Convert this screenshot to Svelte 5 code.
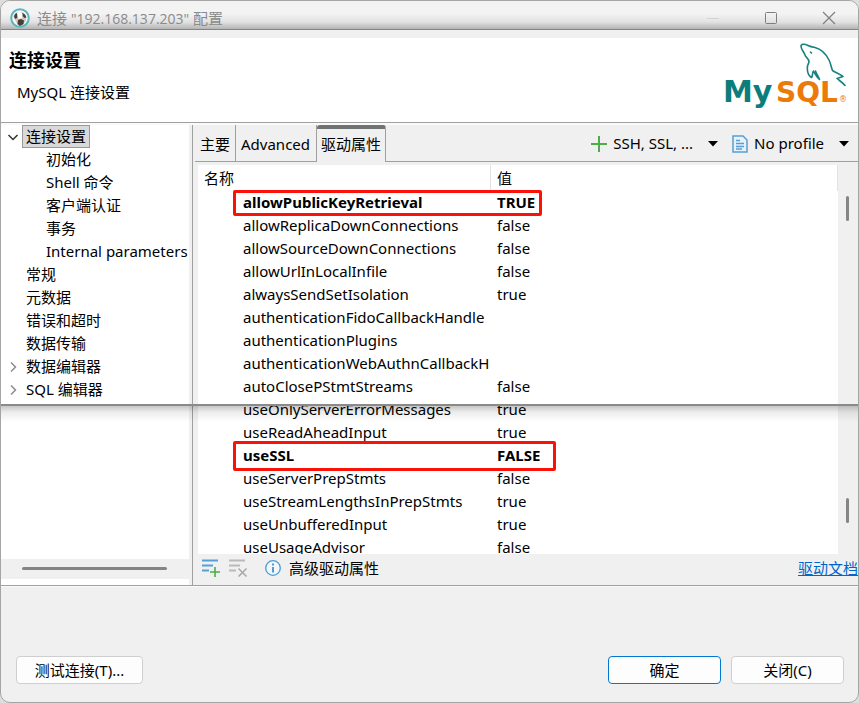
<script>
  const tree = [
    { text: '连接设置', level: 0, arrow: 'open', selected: true },
    { text: '初始化', level: 1 },
    { text: 'Shell 命令', level: 1 },
    { text: '客户端认证', level: 1 },
    { text: '事务', level: 1 },
    { text: 'Internal parameters', level: 1 },
    { text: '常规', level: 0 },
    { text: '元数据', level: 0 },
    { text: '错误和超时', level: 0 },
    { text: '数据传输', level: 0 },
    { text: '数据编辑器', level: 0, arrow: 'closed' },
    { text: 'SQL 编辑器', level: 0, arrow: 'closed' }
  ];
  const tabs = ['主要', 'Advanced', '驱动属性'];
  let active = $state(2);
  const props = [
    ['allowPublicKeyRetrieval', 'TRUE', true],
    ['allowReplicaDownConnections', 'false'],
    ['allowSourceDownConnections', 'false'],
    ['allowUrlInLocalInfile', 'false'],
    ['alwaysSendSetIsolation', 'true'],
    ['authenticationFidoCallbackHandle', ''],
    ['authenticationPlugins', ''],
    ['authenticationWebAuthnCallbackH', ''],
    ['autoClosePStmtStreams', 'false'],
    ['useOnlyServerErrorMessages', 'true'],
    ['useReadAheadInput', 'true'],
    ['useSSL', 'FALSE', true],
    ['useServerPrepStmts', 'false'],
    ['useStreamLengthsInPrepStmts', 'true'],
    ['useUnbufferedInput', 'true'],
    ['useUsageAdvisor', 'false']
  ];
</script>

<div class="dialog">
  <header class="titlebar">
    <svg class="app-icon" width="20" height="20" viewBox="0 0 20 20" aria-hidden="true">
      <circle cx="10" cy="10" r="8.800" fill="#f5f5f3" stroke="#58b6bf" stroke-width="2" />
      <path d="M3.500 9C4 5 8 3 12 4.500l4 3v5l-3 4.500-5 .5-2-4z" fill="#cfc8c1" />
      <path d="M4 8l2-3 2 1-1 4-2 1zM12 4.500l3 2 1.500 3-2 .5-2-2zM8 12l3-1 3 1.500-.5 3.500-3.500 2-2.500-2z" fill="#4a3d36" />
      <path d="M7 5l3-1.500L12.500 6 12 10 9 11 7.500 8z" fill="#fff" />
    </svg>
    <span class="title">连接 <span class="host">"192.168.137.203"</span> 配置</span>
    <button class="win" aria-label="最小化"><svg width="14" height="14"><path d="M1 7.5h12" stroke="#d3d3d3" /></svg></button>
    <button class="win" aria-label="最大化"><svg width="14" height="14"><rect x="1.5" y="1.5" width="11" height="11" rx="1" fill="none" stroke="#7e7e7e" /></svg></button>
    <button class="win" aria-label="关闭"><svg width="14" height="14"><path d="M1 1l12 12M13 1L1 13" stroke="#7e7e7e" stroke-width="1.2" /></svg></button>
  </header>

  <section class="banner">
    <div>
      <h1>连接设置</h1>
      <p>MySQL 连接设置</p>
    </div>
    <svg class="logo" width="124" height="76" viewBox="0 0 124 76" role="img" aria-label="MySQL">
      <g fill="none" stroke="#16827f" stroke-width="1.600" stroke-linejoin="round" stroke-linecap="round">
        <path d="M121 47.500C119 45 116 43 113 40.500L119 38.500C117 36 112 35 108.500 32.500C107 29 107 26 105 22C102 16 97 11 91 9.500C88 9 86 8.500 84 7.500C80 5.500 77 6 77 8.500C77.500 12 79.500 13 81 17C82 20 85 20.500 85 24C84.500 26 83 27 83.300 31C83.500 35 85 38 87.500 39.500C89 38 88 35 89.500 33C91 36 93 39.500 95.500 41.500C94.500 38.500 92.500 36.500 91.500 33" />
        <path d="M86.500 14l1 1" />
      </g>
      <text class="word my" x="-1" y="64" fill="#0b7d7b">My</text>
      <text class="word" x="52" y="64" fill="#ec7a08">SQL</text>
      <text class="reg" x="115" y="64" fill="#ec7a08">®</text>
    </svg>
  </section>

  <main>
    <nav class="side" aria-label="设置">
      <ul>
        {#each tree as item}
          <li class:child={item.level === 1}>
            <span class="twist">
              {#if item.arrow === 'open'}
                <svg width="12" height="12" viewBox="0 0 12 12"><path d="M1.500 4L6 8.500 10.500 4" fill="none" stroke="#333" stroke-width="1.500" /></svg>
              {:else if item.arrow === 'closed'}
                <svg width="12" height="12" viewBox="0 0 12 12"><path d="M4 1.500L8.500 6 4 10.500" fill="none" stroke="#8c8c8c" stroke-width="1.500" /></svg>
              {/if}
            </span>
            <button class:selected={item.selected}>{item.text}</button>
          </li>
        {/each}
      </ul>
      <div class="hscroll"><span></span></div>
    </nav>

    <section class="panel">
      <div class="tabbar">
        <div class="tabs" role="tablist">
          {#each tabs as tab, i}
            <button role="tab" aria-selected={active === i} class:active={active === i} onclick={() => (active = i)}>{tab}</button>
          {/each}
        </div>
        <div class="tools">
          <button class="drop">
            <svg width="16" height="16"><path d="M8 0v16M0 8h16" stroke="#4fab4b" stroke-width="2" /></svg>
            <span>SSH, SSL, ...</span>
            <svg class="caret" width="10" height="6"><path d="M0 0h10L5 5.500z" /></svg>
          </button>
          <button class="drop">
            <svg width="16" height="18" viewBox="0 0 16 18"><path d="M1 1h10l4 4v12H1z" fill="#e8f2fa" stroke="#559fd3" stroke-width="1.500" /><path d="M4 5.500h4M4 8.500h8M4 11.500h8M4 14h6" stroke="#559fd3" stroke-width="1.300" /></svg>
            <span>No profile</span>
            <svg class="caret" width="10" height="6"><path d="M0 0h10L5 5.500z" /></svg>
          </button>
        </div>
      </div>

      <div class="grid">
        <div class="view">
          <table>
            <thead>
              <tr><th class="name">名称</th><th>值</th></tr>
            </thead>
            <tbody>
              {#each props as [name, value, changed]}
                <tr class:changed><td>{name}</td><td>{value}</td></tr>
              {/each}
            </tbody>
          </table>
          <div class="mark first"></div>
          <div class="mark second"></div>
        </div>
        <div class="vscroll"><span></span><span></span></div>
      </div>

      <div class="actions">
        <button aria-label="添加属性"><svg width="19" height="18"><path d="M0 1.500h16M0 6.500h11M0 11.500h7" stroke="#559fd3" stroke-width="1.800" /><path d="M13 8v10M8 13h10" stroke="#4fab4b" stroke-width="1.600" /></svg></button>
        <button aria-label="删除属性" disabled><svg width="19" height="18"><path d="M0 1.500h16M0 6.500h11M0 11.500h7" stroke="#b9b9b9" stroke-width="1.800" /><path d="M9.500 9.500l8 8M17.500 9.500l-8 8" stroke="#a8a8a8" stroke-width="1.500" /></svg></button>
        <svg class="info" width="16" height="16"><circle cx="8" cy="8" r="7.300" fill="#f1f7fb" stroke="#4b9ad2" stroke-width="1.300" /><path d="M8 3.500v2M8 7v5.500" stroke="#3f92ce" stroke-width="1.800" /></svg>
        <span>高级驱动属性</span>
        <a href="#docs">驱动文档</a>
      </div>
    </section>
    <div class="seam"></div>
  </main>

  <footer>
    <button class="test">测试连接(T)...</button>
    <button class="ok">确定</button>
    <button>关闭(C)</button>
  </footer>
</div>

<style>
  :global(body) {
    background: #dedede;
  }
  .dialog {
    box-sizing: border-box;
    min-height: 100vh;
    display: flex;
    flex-direction: column;
    border: 1px solid #a5a5a5;
    border-radius: 10px;
    background: #f0f0f0;
    overflow: hidden;
    color: #000;
    font: 15px/23px "Noto Sans", "Noto Sans CJK SC", sans-serif;
  }
  button {
    font: inherit;
    color: inherit;
    border: 0;
    padding: 0;
    background: none;
    white-space: nowrap;
  }
  svg {
    display: block;
    flex: none;
  }
  .titlebar {
    display: flex;
    align-items: center;
    box-sizing: border-box;
    height: 29px;
    padding: 6px 0 0 9px;
    border-bottom: 1px solid #858585;
    background: linear-gradient(#f3f3f3 0 45%, #e2e2e2 75%, #b4b4b4);
  }
  .title {
    flex: 1;
    padding-left: 7px;
    color: #8a8a8a;
    font-family: "Open Sans", "Noto Sans CJK SC", sans-serif;
  }
  .host {
    font-size: 14px;
  }
  .win {
    width: 58px;
    display: flex;
    justify-content: center;
  }
  .banner {
    display: flex;
    justify-content: space-between;
    margin-top: 8px;
    padding: 0 10px 0 8px;
    height: 84px;
    background: #fff;
    border-bottom: 1px solid #a0a0a0;
  }
  h1 {
    margin: 10px 0 0;
    font-size: 18px;
    line-height: 24px;
    font-weight: 700;
  }
  p {
    margin: 9px 0 0 8px;
  }
  .word {
    font: bold 28px "DejaVu Sans", sans-serif;
  }
  .my {
    font-size: 30px;
  }
  .reg {
    font: 8px "DejaVu Sans", sans-serif;
  }
  main {
    position: relative;
    display: flex;
    height: 460px;
    border-top: 2px solid #fafafa;
    border-bottom: 1px solid #a0a0a0;
  }
  .side {
    flex: none;
    display: flex;
    flex-direction: column;
    width: 188px;
    margin-right: 3px;
    background: #fff;
  }
  ul {
    flex: 1;
    list-style: none;
    margin: 0;
    padding: 0;
  }
  li {
    display: flex;
    align-items: center;
    height: 23px;
  }
  .twist {
    flex: none;
    width: 15px;
    padding-left: 6px;
  }
  .child .twist {
    width: 35px;
  }
  li button {
    box-sizing: border-box;
    height: 23px;
    padding: 0 3px;
    border: 1px solid transparent;
    line-height: 21px;
  }
  li .selected {
    background: #d9d9d9;
    border-color: #999;
  }
  .hscroll {
    height: 20px;
    margin-bottom: 6px;
    padding: 8px 22px 0 21px;
    box-sizing: border-box;
    background: #f0f0f0;
  }
  .hscroll span {
    display: block;
    height: 3px;
    border-radius: 2px;
    background: #858585;
  }
  .panel {
    flex: 1;
    min-width: 0;
    display: flex;
    flex-direction: column;
    border-left: 1px solid #a0a0a0;
  }
  .tabbar {
    display: flex;
    justify-content: space-between;
    height: 37px;
    margin-left: 2px;
    box-shadow: inset 0 -1px #a0a0a0;
  }
  .tabs {
    display: flex;
  }
  .tabs button {
    box-sizing: border-box;
    padding: 2px 5px 0;
    border-right: 1px solid #a0a0a0;
  }
  .tabs button + button {
    padding: 2px 6px 0 5px;
  }
  .tabs button.active {
    padding: 0 4px 2px;
    border-top: 4px solid #6f7372;
    border-radius: 3px 3px 0 0;
    background: #f0f0f0;
  }
  .tools {
    display: flex;
    align-items: center;
    gap: 14px;
    padding-right: 9px;
  }
  .drop {
    display: flex;
    align-items: center;
    gap: 6px;
  }
  .drop .caret {
    margin-left: 9px;
  }
  .grid {
    flex: 1;
    min-height: 0;
    display: flex;
    margin: 3px 0 0 5px;
  }
  .view {
    position: relative;
    flex: 1;
    overflow: hidden;
    background: #fff;
  }
  table {
    width: 100%;
    table-layout: fixed;
    border-collapse: separate;
    border-spacing: 0;
  }
  th {
    box-sizing: border-box;
    height: 26px;
    padding: 0 6px;
    text-align: left;
    font-weight: 400;
    background: linear-gradient(#e2e2e2, #e2e2e2) right / 1px 100% no-repeat;
  }
  .name {
    width: 293px;
  }
  td {
    height: 23px;
    padding: 0 0 0 6px;
    white-space: nowrap;
    overflow: hidden;
  }
  td:first-child {
    padding-left: 45px;
  }
  .changed {
    font-weight: 700;
  }
  .mark {
    position: absolute;
    box-sizing: border-box;
    left: 35px;
    border: 3px solid #fa1208;
    border-radius: 2px;
  }
  .first {
    top: 25px;
    width: 309px;
    height: 26px;
  }
  .second {
    top: 276px;
    width: 323px;
    height: 30px;
  }
  .vscroll {
    flex: none;
    width: 20px;
    box-sizing: border-box;
    padding: 31px 0 0 8px;
  }
  .vscroll span {
    display: block;
    width: 3px;
    height: 25px;
    border-radius: 2px;
    background: #858585;
  }
  .vscroll span + span {
    margin-top: 277px;
  }
  .actions {
    display: flex;
    align-items: center;
    height: 31px;
    padding: 0 0 3px 9px;
    box-sizing: border-box;
    gap: 8px;
  }
  .info {
    margin-left: 9px;
  }
  .actions a {
    margin-left: auto;
    color: #0066cc;
  }
  .seam {
    position: absolute;
    top: 279px;
    left: 0;
    right: 0;
    height: 16px;
    border-top: 2px solid #8a8a8a;
    background: linear-gradient(rgb(0 0 0 / 0.22), rgb(0 0 0 / 0.07) 40%, transparent);
    pointer-events: none;
  }
  footer {
    flex: 1;
    display: flex;
    align-items: flex-end;
    gap: 10px;
    padding: 0 14px 18px 15px;
    border-top: 1px solid #fafafa;
  }
  footer button {
    box-sizing: border-box;
    width: 113px;
    height: 28px;
    border: 1px solid #cfcfcf;
    border-radius: 4px;
    background: #fdfdfd;
  }
  footer .test {
    width: 127px;
    margin-right: auto;
  }
  footer .ok {
    border-color: #0078d4;
  }
</style>
